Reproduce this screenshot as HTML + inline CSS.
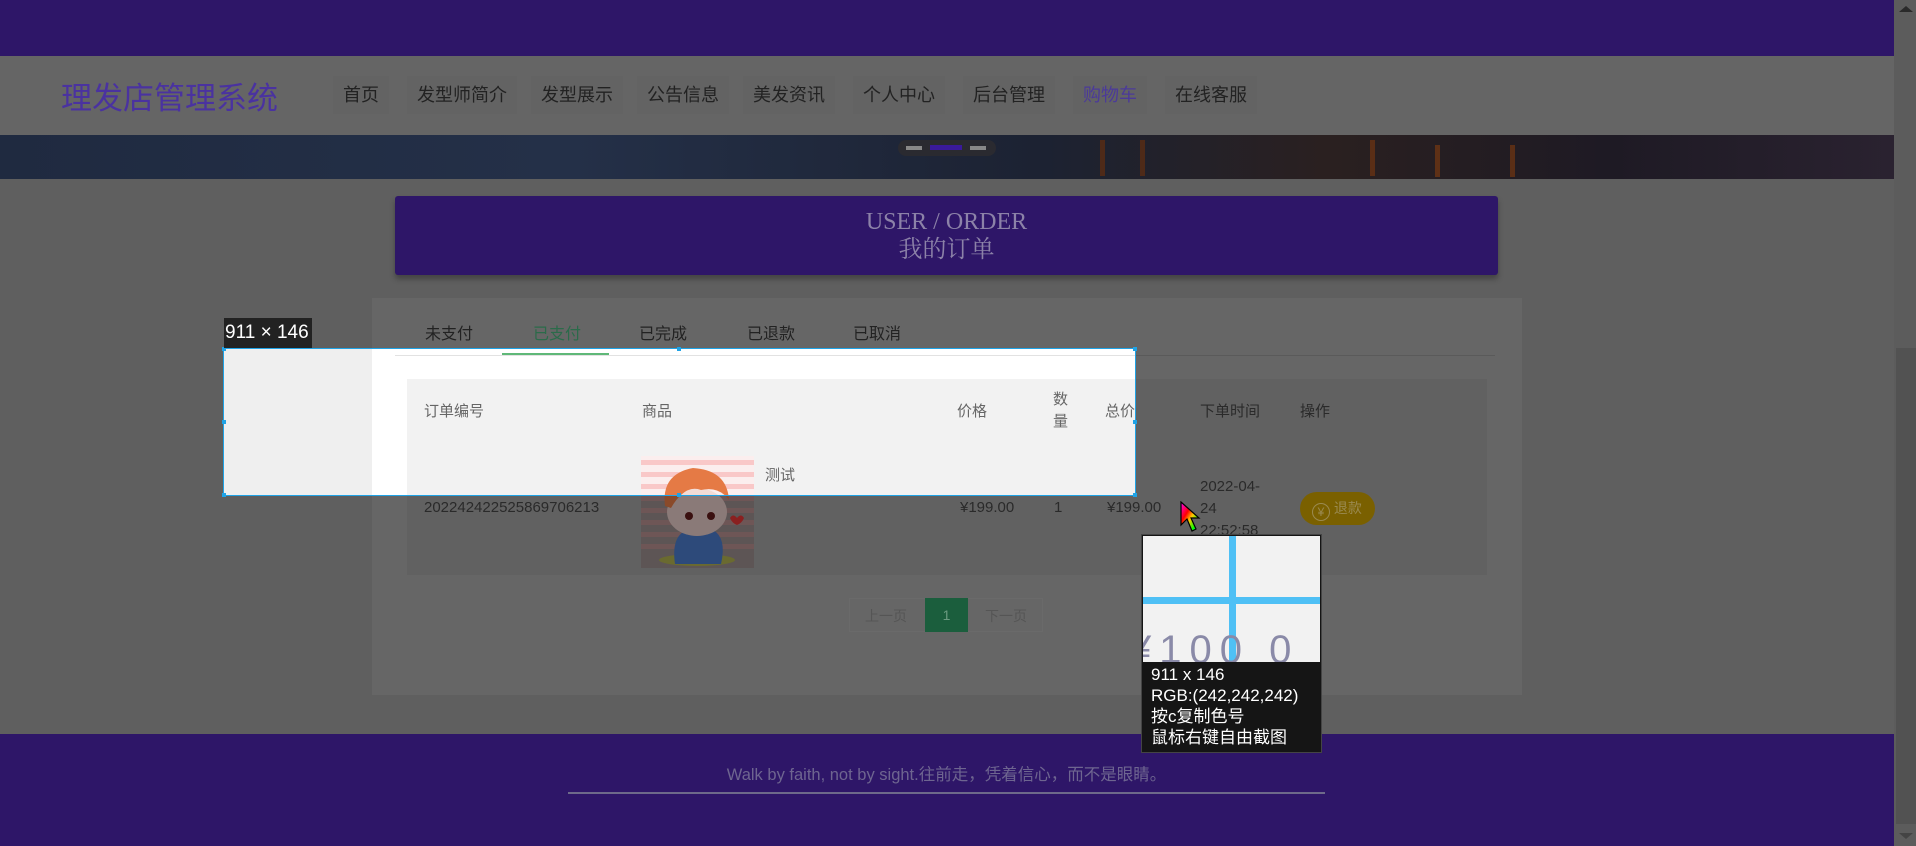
<!DOCTYPE html>
<html><head><meta charset="utf-8">
<style>
*{margin:0;padding:0;box-sizing:border-box}
body{width:1916px;height:846px;overflow:hidden;background:#5f5f5f;position:relative;font-family:"Liberation Sans","Noto Sans CJK SC",sans-serif}
.a{position:absolute;white-space:nowrap}
.nav{font-size:18px;color:#222;height:38px;line-height:38px;padding:0 10px;background:#636363;top:76px}
.th{font-size:15px;color:#2a2a2a}
.thu{font-size:15px;color:#666}
</style></head><body>
<div class="a" style="left:0;top:0;width:1894px;height:56px;background:#2e1668"></div>
<div class="a" style="left:0;top:56px;width:1894px;height:79px;background:#656565"></div>
<div class="a" style="left:61px;top:73px;font-size:31px;color:#4a32a0;font-family:'Noto Sans CJK SC',sans-serif">理发店管理系统</div>
<div class="a nav" style="left:333px">首页</div>
<div class="a nav" style="left:407px">发型师简介</div>
<div class="a nav" style="left:531px">发型展示</div>
<div class="a nav" style="left:637px">公告信息</div>
<div class="a nav" style="left:743px">美发资讯</div>
<div class="a nav" style="left:853px">个人中心</div>
<div class="a nav" style="left:963px">后台管理</div>
<div class="a nav" style="left:1073px;color:#4b3a99">购物车</div>
<div class="a nav" style="left:1165px">在线客服</div>
<div class="a" style="left:0;top:135px;width:1894px;height:44px;background:linear-gradient(90deg,#1f2a40 0%,#243048 30%,#1c2232 55%,#2a2020 70%,#1e1a24 85%,#2a2230 100%)"></div>
<div class="a" style="left:1100px;top:140px;width:5px;height:36px;background:#4e2a18"></div>
<div class="a" style="left:1140px;top:140px;width:5px;height:36px;background:#4e2a18"></div>
<div class="a" style="left:1370px;top:140px;width:5px;height:36px;background:#5a2e16"></div>
<div class="a" style="left:1435px;top:145px;width:5px;height:32px;background:#5e3016"></div>
<div class="a" style="left:1510px;top:145px;width:5px;height:32px;background:#5a2e16"></div>
<div class="a" style="left:898px;top:140px;width:98px;height:16px;background:#2a2a30;border-radius:8px"></div>
<div class="a" style="left:906px;top:146px;width:16px;height:4px;background:#888"></div>
<div class="a" style="left:930px;top:145px;width:32px;height:5px;background:#3a1a9a"></div>
<div class="a" style="left:970px;top:146px;width:16px;height:4px;background:#888"></div>
<div class="a" style="left:395px;top:196px;width:1103px;height:79px;background:#2e1668;border-radius:3px;box-shadow:0 4px 6px rgba(0,0,0,.3)"></div>
<div class="a" style="left:395px;top:208px;width:1103px;text-align:center;font-family:'Liberation Serif','Noto Serif CJK SC',serif;font-size:24px;line-height:28px;color:#8c82a8">USER / ORDER<br>我的订单</div>
<div class="a" style="left:372px;top:298px;width:1150px;height:397px;background:#666"></div>
<div class="a" style="left:425px;top:320px;font-size:16px;color:#222">未支付</div>
<div class="a" style="left:533px;top:320px;font-size:16px;color:#2b6b4a">已支付</div>
<div class="a" style="left:639px;top:320px;font-size:16px;color:#222">已完成</div>
<div class="a" style="left:747px;top:320px;font-size:16px;color:#222">已退款</div>
<div class="a" style="left:853px;top:320px;font-size:16px;color:#222">已取消</div>
<div class="a" style="left:395px;top:355px;width:1100px;height:1px;background:#5a5a5a"></div>
<div class="a" style="left:502px;top:353px;width:107px;height:2px;background:#2e8a5e"></div>
<div class="a" style="left:407px;top:379px;width:1080px;height:196px;background:#616161"></div>
<div class="a th" style="left:1105px;top:400px">总价</div>
<div class="a th" style="left:1200px;top:400px">下单时间</div>
<div class="a th" style="left:1300px;top:400px">操作</div>
<div class="a th" style="left:424px;top:499px">202242422525869706213</div>
<div class="a th" style="left:960px;top:499px">¥199.00</div>
<div class="a th" style="left:1054px;top:499px">1</div>
<div class="a th" style="left:1107px;top:499px">¥199.00</div>
<div class="a th" style="left:1200px;top:476px;line-height:22px">2022-04-<br>24<br>22:52:58</div>
<div class="a" style="left:1300px;top:492px;width:75px;height:33px;border-radius:17px;background:#7a6000;color:#9a8a50;font-size:14px;line-height:33px;padding-left:12px">
<span style="display:inline-block;width:18px;height:18px;border:1px solid #9a8a50;border-radius:50%;text-align:center;line-height:16px;font-size:12px;vertical-align:-3px">¥</span> 退款</div>
<svg class="a" style="left:641px;top:456px" width="113" height="112" viewBox="0 0 113 112">
<rect width="113" height="112" fill="#5d5555"/>
<g fill="#6e5656"><rect y="4" width="113" height="5"/><rect y="16" width="113" height="5"/><rect y="28" width="113" height="5"/><rect y="40" width="113" height="5"/><rect y="52" width="113" height="5"/><rect y="64" width="113" height="5"/><rect y="76" width="113" height="5"/><rect y="88" width="113" height="5"/></g>
<ellipse cx="56" cy="104" rx="38" ry="6" fill="#6a6a30"/>
<path d="M34 108 Q30 80 46 74 L72 74 Q86 82 80 108 Z" fill="#2d4a7a"/>
<ellipse cx="56" cy="56" rx="30" ry="24" fill="#8a7a78"/>
<path d="M24 50 Q20 18 52 12 Q86 14 88 44 Q78 30 60 34 Q44 28 30 52 Z" fill="#8a4a2a"/>
<circle cx="48" cy="60" r="4" fill="#3a1010"/><circle cx="70" cy="60" r="4" fill="#3a1010"/>
<path d="M96 62 q4 -5 7 0 q-2 5 -7 7 q-5 -2 -7 -7 q3 -5 7 0z" fill="#8a2020"/>
</svg>
<div class="a" style="left:849px;top:598px;width:194px;height:34px;border:1px solid #6a6a6a"></div>
<div class="a" style="left:865px;top:606px;font-size:14px;color:#555">上一页</div>
<div class="a" style="left:925px;top:598px;width:43px;height:34px;background:#1b5e3d;color:#6a9a80;font-size:14px;text-align:center;line-height:34px">1</div>
<div class="a" style="left:985px;top:606px;font-size:14px;color:#555">下一页</div>
<div class="a" style="left:0;top:734px;width:1894px;height:112px;background:#2e1668"></div>
<div class="a" style="left:568px;top:761px;width:757px;text-align:center;font-size:16.5px;color:#6e6590">Walk by faith, not by sight.往前走，凭着信心，而不是眼睛。</div>
<div class="a" style="left:568px;top:792px;width:757px;height:2px;background:#6e6a8a"></div>
<div class="a" style="left:1894px;top:0;width:22px;height:846px;background:#5c5c5c"></div>
<div class="a" style="left:1896px;top:348px;width:20px;height:476px;background:#525252"></div>
<div class="a" style="left:1899px;top:6px;width:0;height:0;border-left:7px solid transparent;border-right:7px solid transparent;border-bottom:6px solid #2a2a2a"></div>
<div class="a" style="left:1899px;top:833px;width:0;height:0;border-left:7px solid transparent;border-right:7px solid transparent;border-top:6px solid #444"></div>

<div class="a" style="left:224px;top:349px;width:911px;height:146px;overflow:hidden;background:#efefef">
  <div class="a" style="left:148px;top:0;width:800px;height:200px;background:#fff"></div>
  <div class="a" style="left:171px;top:6px;width:800px;height:1px;background:#e2e2e2"></div>
  <div class="a" style="left:278px;top:4px;width:107px;height:2px;background:#5FB878"></div>
  <div class="a" style="left:183px;top:30px;width:800px;height:200px;background:#f2f2f2"></div>
  <div class="a thu" style="left:200px;top:51px">订单编号</div>
  <div class="a thu" style="left:418px;top:51px">商品</div>
  <div class="a thu" style="left:733px;top:51px">价格</div>
  <div class="a thu" style="left:829px;top:40px;line-height:22px">数<br>量</div>
  <div class="a thu" style="left:881px;top:51px">总价</div>
  <div class="a thu" style="left:541px;top:115px">测试</div>
  <svg class="a" style="left:417px;top:107px" width="113" height="112" viewBox="0 0 113 112">
  <rect width="113" height="112" fill="#fbeeee"/>
  <g fill="#f9c8c8"><rect y="4" width="113" height="5"/><rect y="16" width="113" height="5"/><rect y="28" width="113" height="5"/><rect y="40" width="113" height="5"/></g>
  <ellipse cx="56" cy="56" rx="30" ry="24" fill="#f3dcd6"/>
  <path d="M24 50 Q20 18 52 12 Q86 14 88 44 Q78 30 60 34 Q44 28 30 52 Z" fill="#e57a45"/>
  </svg>
</div>
<div class="a" style="left:223px;top:348px;width:913px;height:148px;border:1px solid #1fa3e6"></div>
<div class="a" style="left:222px;top:347px;width:4px;height:4px;background:#1fa3e6"></div>
<div class="a" style="left:677px;top:347px;width:4px;height:4px;background:#1fa3e6"></div>
<div class="a" style="left:1133px;top:347px;width:4px;height:4px;background:#1fa3e6"></div>
<div class="a" style="left:222px;top:420px;width:4px;height:4px;background:#1fa3e6"></div>
<div class="a" style="left:1133px;top:420px;width:4px;height:4px;background:#1fa3e6"></div>
<div class="a" style="left:222px;top:493px;width:4px;height:4px;background:#1fa3e6"></div>
<div class="a" style="left:677px;top:493px;width:4px;height:4px;background:#1fa3e6"></div>
<div class="a" style="left:1133px;top:493px;width:4px;height:4px;background:#1fa3e6"></div>
<div class="a" style="left:224px;top:318px;width:88px;height:30px;background:#222;color:#fff;font-size:19px;line-height:30px;padding-left:1px">911 × 146</div>

<svg class="a" style="left:1180px;top:501px" width="22" height="34" viewBox="0 0 22 34">
<defs><linearGradient id="g" x1="0" y1="0" x2="1" y2="1"><stop offset="0" stop-color="#f0f"/><stop offset=".35" stop-color="#f00"/><stop offset=".55" stop-color="#fc0"/><stop offset=".8" stop-color="#0f0"/><stop offset="1" stop-color="#0cf"/></linearGradient></defs>
<path d="M1 1 L1 24 L7 18 L12 30 L16 28 L11 17 L19 17 Z" fill="url(#g)" stroke="#000" stroke-width="1.2"/>
</svg>
<div class="a" style="left:1141px;top:534px;width:181px;height:219px;background:#151515;border:1px solid #444"></div>
<div class="a" style="left:1143px;top:536px;width:177px;height:126px;background:#f2f2f2;overflow:hidden">
  <div class="a" style="left:0;top:61px;width:177px;height:7px;background:#4fc0f5"></div>
  <div class="a" style="left:86px;top:0;width:7px;height:126px;background:#4fc0f5"></div>
  <div class="a" style="left:-14px;top:92px;font-size:40px;color:#8a8aa8;letter-spacing:8px">¥100 0</div>
</div>
<div class="a" style="left:1151px;top:664px;font-size:17px;line-height:21px;color:#fff;font-family:'Liberation Sans','Noto Sans CJK SC',sans-serif">911 x 146<br>RGB:(242,242,242)<br>按c复制色号<br>鼠标右键自由截图</div>
</body></html>
